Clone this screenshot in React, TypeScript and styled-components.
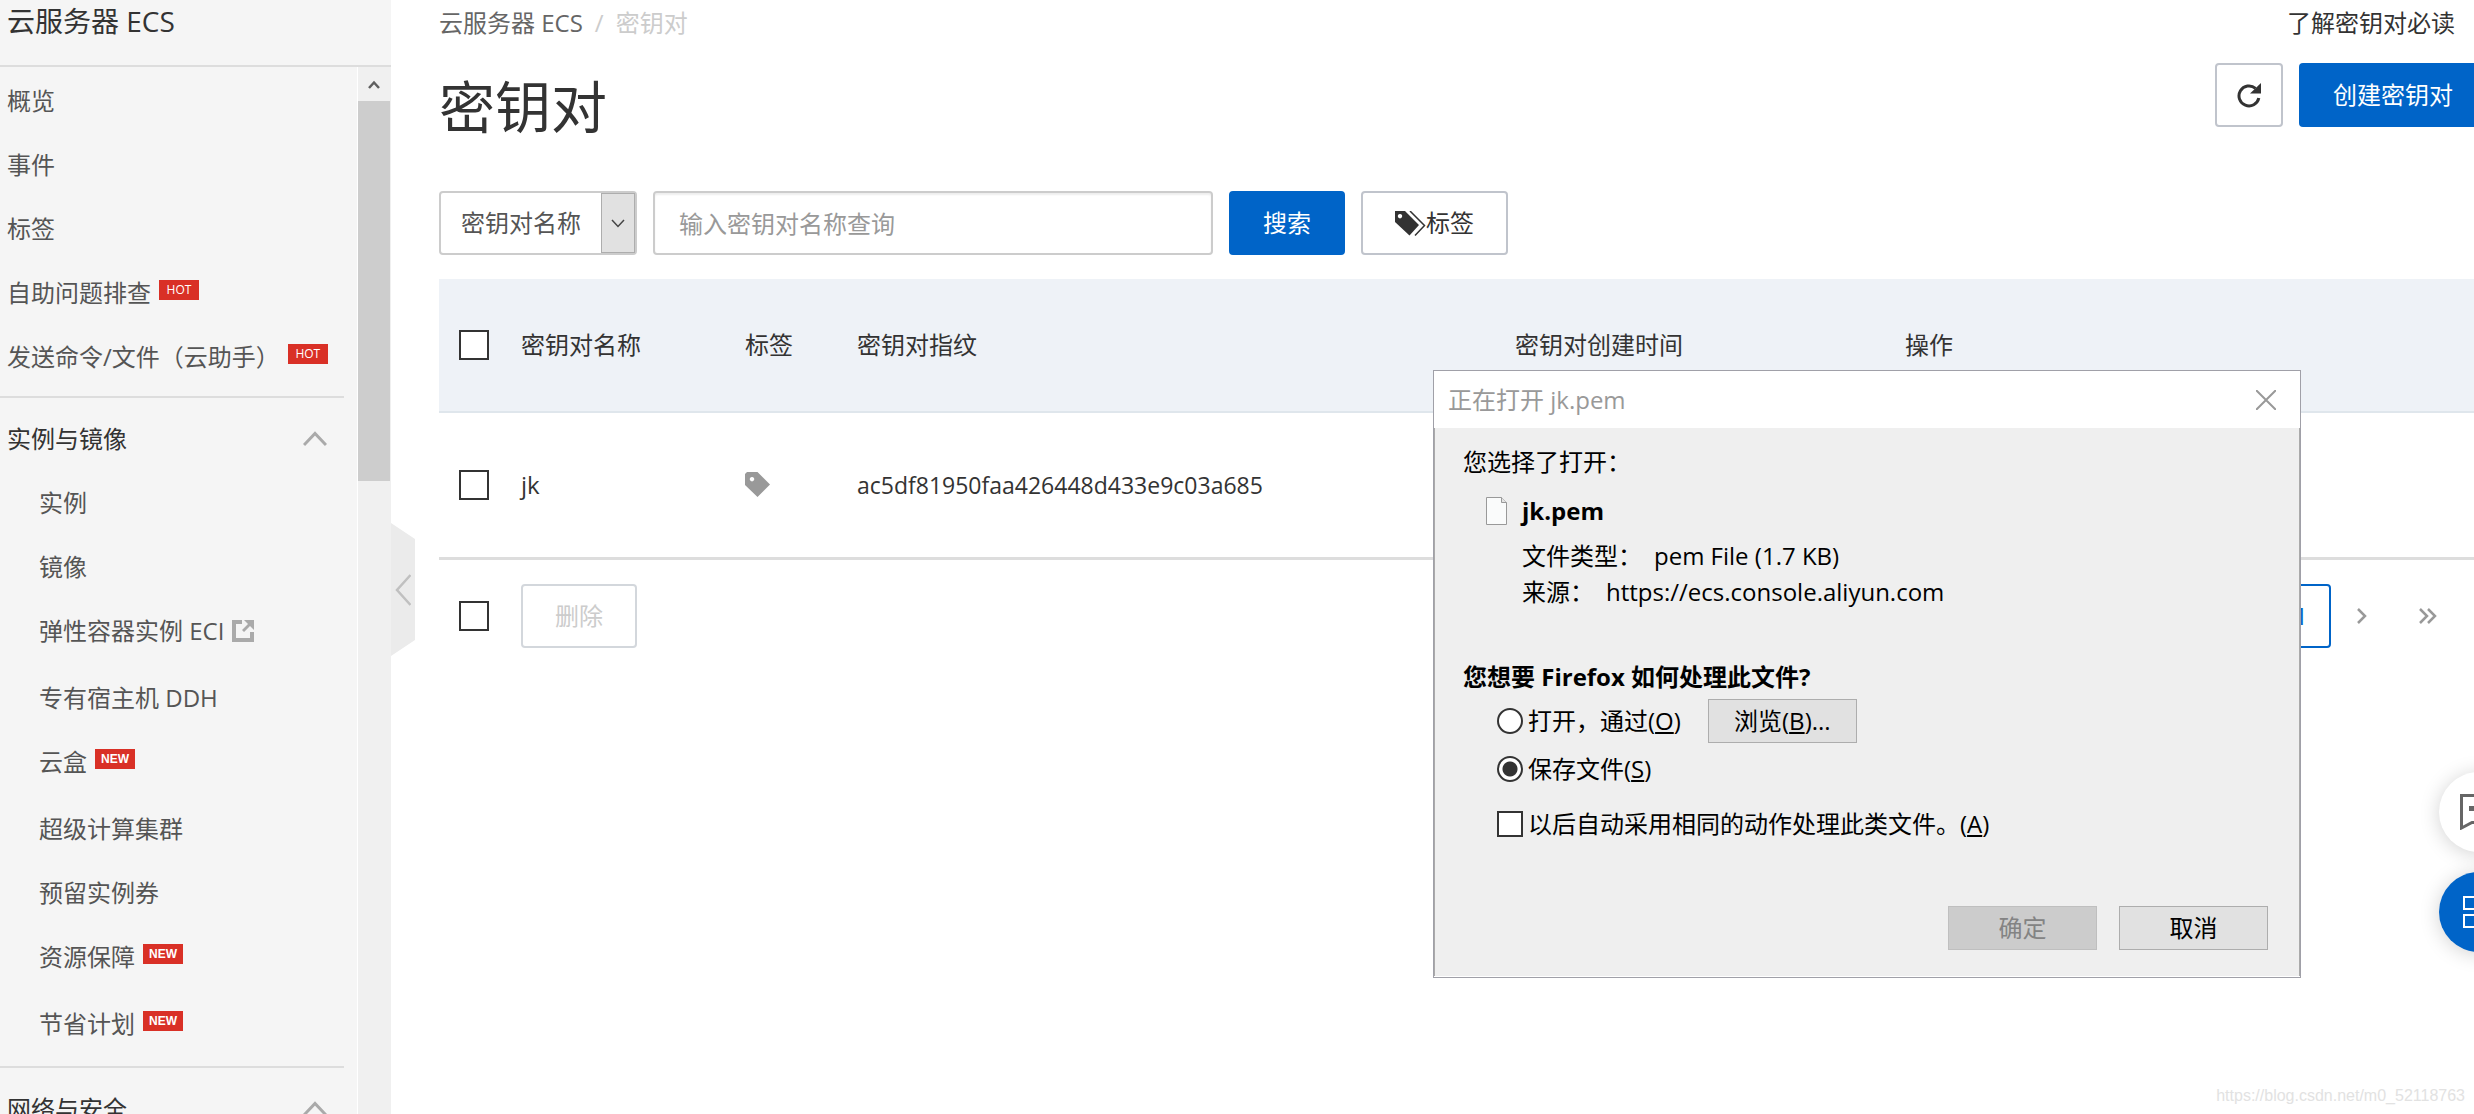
import React from "react";
import styled, { createGlobalStyle, css } from "styled-components";

const GlobalStyle = createGlobalStyle`
  * { box-sizing: border-box; }
  html, body { margin: 0; padding: 0; }
  body {
    background: #fff;
    color: #333;
    font-family: "Open Sans", "Noto Sans CJK SC", sans-serif;
    font-size: 24px;
    line-height: 32px;
  }
  button, input, select { font: inherit; color: inherit; margin: 0; }
  a { color: inherit; text-decoration: none; }
  h1, h2, h3, p, ul { margin: 0; padding: 0; font-weight: 400; }
  ul { list-style: none; }
`;

const Page = styled.div`
  display: flex;
  height: 100vh;
  overflow: hidden;
  position: relative;
`;

/* Sidebar */
const Sidebar = styled.aside`
  position: relative;
  flex: none;
  width: 391px;
  display: flex;
  flex-direction: column;
  background: #f5f5f5;
`;
const SidebarTitle = styled.h2`
  flex: none;
  height: 67px;
  padding: 3px 7px 0;
  border-bottom: 2px solid #ddd;
  font-size: 28px;
  line-height: 36px;
`;
const SidebarBody = styled.div`
  flex: 1;
  min-height: 0;
  display: flex;
`;
const Nav = styled.nav`
  flex: 1;
  min-width: 0;
  overflow: hidden;
  padding: 2px 13px 0 0;
`;
const NavList = styled.ul`
  color: #555;
`;
const NavItem = styled.li<{ $sub?: boolean; $tall?: boolean }>`
  padding-left: ${(p) => (p.$sub ? 39 : 7)}px;
  padding-bottom: ${(p) => (p.$tall ? 3 : 0)}px;
`;
const NavLink = styled.a`
  display: flex;
  align-items: center;
  gap: 8px;
  height: 64px;
  white-space: nowrap;
`;
const GroupButton = styled.button`
  display: flex;
  align-items: center;
  justify-content: space-between;
  width: 100%;
  height: 64px;
  padding: 0 17px 0 7px;
  border: 0;
  background: none;
  text-align: left;
`;
const Divider = styled.hr`
  margin: 7px 0 9px;
  border: 0;
  height: 2px;
  background: #ddd;
`;
const Badge = styled.span<{ $bold?: boolean }>`
  width: 40px;
  height: 20px;
  margin-bottom: 6px;
  background: #d93026;
  color: #fff;
  font-family: ${(p) => (p.$bold ? '"Liberation Sans"' : '"Open Sans"')}, sans-serif;
  font-weight: ${(p) => (p.$bold ? 700 : 400)};
  font-size: 12px;
  line-height: 20px;
  text-align: center;
`;
const ScrollTrack = styled.div`
  flex: none;
  width: 34px;
  padding-right: 1px;
  border-left: 1px solid #fff;
  background: #f0f0f0;
`;
const ScrollUp = styled.div`
  height: 34px;
  display: flex;
  align-items: center;
  justify-content: center;
`;
const ScrollThumb = styled.div`
  height: 380px;
  background: #cdcdcd;
`;
const CollapseHandle = styled.button`
  position: absolute;
  top: 523px;
  left: 100%;
  width: 24px;
  height: 133px;
  padding: 0;
  border: 0;
  background: #ebebeb;
  clip-path: polygon(0 0, 100% 16px, 100% 117px, 0 100%);
  display: flex;
  align-items: center;
  justify-content: center;
`;

/* Main area */
const Main = styled.main`
  flex: 1;
  min-width: 0;
  padding-left: 48px;
`;
const TopBar = styled.div`
  display: flex;
  justify-content: space-between;
  height: 63px;
  padding-right: 19px;
  line-height: 46px;
`;
const Crumbs = styled.nav`
  display: flex;
  gap: 12px;
  color: #ccc;
  a { color: #666; }
`;
const TitleRow = styled.div`
  display: flex;
  align-items: flex-start;
  justify-content: space-between;
  margin-bottom: 42px;
`;
const Title = styled.h1`
  font-size: 56px;
  line-height: 86px;
`;
const Actions = styled.div`
  display: flex;
  gap: 16px;
`;
const Button = styled.button<{ $kind?: "primary" | "edge" }>`
  display: inline-flex;
  align-items: center;
  justify-content: center;
  height: 64px;
  padding: 0 32px;
  border: 2px solid #c0c4cc;
  border-radius: 4px;
  background: #fff;
  white-space: nowrap;
  ${(p) =>
    p.$kind &&
    css`
      border-color: #0064c8;
      background: #0064c8;
      color: #fff;
    `}
  ${(p) =>
    p.$kind === "edge" &&
    css`
      padding-right: 21px;
      border-right: 0;
      border-radius: 4px 0 0 4px;
    `}
  &:disabled {
    border-color: #d3d7dc;
    color: #ccc;
  }
`;
const IconButton = styled(Button)`
  width: 68px;
  padding: 0;
`;
const Filters = styled.form`
  display: flex;
  gap: 16px;
  margin-bottom: 24px;
`;
const SelectBox = styled.div`
  display: flex;
  width: 198px;
  height: 64px;
  border: 2px solid #ccc;
  border-radius: 4px;
`;
const Select = styled.select`
  flex: 1;
  min-width: 0;
  padding: 0 0 0 20px;
  border: 0;
  appearance: none;
  background: transparent;
  color: #555;
  outline: 0;
`;
const SelectArrow = styled.span`
  display: flex;
  align-items: center;
  justify-content: center;
  width: 34px;
  border: 1px solid #adadad;
  background: #e1e1e1;
`;
const SearchInput = styled.input`
  width: 560px;
  height: 64px;
  padding: 0 24px;
  border: 2px solid #ccc;
  border-radius: 4px;
  box-shadow: inset 0 2px 2px #eee;
  outline: 0;
  &::placeholder { color: #999; opacity: 1; }
`;
const Check = styled.input`
  appearance: none;
  display: block;
  flex: none;
  width: 30px;
  height: 30px;
  border: 2px solid #333;
  background: #fff;
`;
const Table = styled.table`
  width: 100%;
  border-collapse: collapse;
  table-layout: fixed;
  th, td {
    padding: 0 16px;
    text-align: left;
    font-weight: 400;
    white-space: nowrap;
  }
  th { height: 133px; }
  td { height: 146px; }
  th:first-child, td:first-child { padding: 0 0 0 20px; }
  thead tr { background: #eef2f7; border-bottom: 2px solid #dfe6ec; }
  tbody tr { border-bottom: 3px solid #ddd; }
`;
const Fingerprint = styled.span`
  font-size: 23px;
`;
const TableFoot = styled.div`
  display: flex;
  align-items: center;
  gap: 32px;
  padding: 24px 19px 0 20px;
`;
const Pager = styled.nav`
  display: flex;
  margin-left: auto;
`;
const PageButton = styled.button<{ $active?: boolean }>`
  display: flex;
  align-items: center;
  width: 62px;
  height: 64px;
  padding: 0 0 0 26px;
  border: 0;
  background: none;
  color: #999;
  ${(p) =>
    p.$active &&
    css`
      width: 64px;
      padding: 0 0 0 4px;
      justify-content: center;
      border: 2px solid #0064c8;
      border-radius: 4px;
      color: #0064c8;
    `}
`;

/* Download dialog */
const Dialog = styled.section`
  position: absolute;
  top: 370px;
  right: 173px;
  width: 868px;
  border: 1px solid #a0a0a8;
  background: #fff;
  color: #000;
`;
const DialogHead = styled.header`
  display: flex;
  align-items: center;
  justify-content: space-between;
  height: 57px;
  padding: 0 24px 0 14px;
  color: #999;
`;
const CloseButton = styled.button`
  display: flex;
  padding: 0;
  border: 0;
  background: none;
`;
const DialogBody = styled.div`
  padding: 18px 31px 26px 28px;
  margin-bottom: 1px;
  border: solid #aaa;
  border-width: 0 1px;
  background: #efefef;
`;
const FileRow = styled.div`
  display: flex;
  align-items: center;
  gap: 15px;
  padding: 17px 0 11px 23px;
  line-height: 32px;
  strong { font-weight: 700; }
`;
const FileFacts = styled.dl`
  margin: 0 0 51px 59px;
  line-height: 36px;
  div { display: flex; gap: 12px; }
  dt, dd { margin: 0; }
`;
const Question = styled.h3`
  font-size: 24px;
  font-weight: 700;
  line-height: 32px;
`;
const OptionRow = styled.div<{ $height: number }>`
  display: flex;
  align-items: center;
  gap: 27px;
  height: ${(p) => p.$height}px;
  padding-left: 34px;
`;
const Option = styled.label`
  display: flex;
  align-items: center;
  gap: 5px;
`;
const Radio = styled.input`
  appearance: none;
  flex: none;
  width: 26px;
  height: 26px;
  border: 2px solid #333;
  border-radius: 50%;
  background: #fff;
  &:checked { background: radial-gradient(circle, #333 7px, #fff 8px); }
`;
const DialogCheck = styled(Check)`
  width: 26px;
  height: 26px;
`;
const DialogButton = styled.button`
  width: 149px;
  height: 44px;
  padding: 0;
  border: 1px solid #adadad;
  background: #e1e1e1;
  &:disabled {
    border-color: #bfbfbf;
    background: #ccc;
    color: #838383;
  }
`;
const DialogActions = styled.div`
  display: flex;
  justify-content: flex-end;
  gap: 22px;
  margin-top: 47px;
`;

/* Overlays on the page edge */
const FloatStack = styled.div`
  position: absolute;
  top: 772px;
  right: -45px;
  display: grid;
  gap: 20px;
`;
const FloatButton = styled.button<{ $blue?: boolean }>`
  display: flex;
  align-items: center;
  width: 80px;
  height: 80px;
  padding: 0 0 0 ${(p) => (p.$blue ? 24 : 21)}px;
  border: 0;
  border-radius: 50%;
  background: ${(p) => (p.$blue ? "#0064c8" : "#fff")};
  box-shadow: 0 2px 20px rgba(0, 0, 0, 0.18);
`;
const Watermark = styled.span`
  position: absolute;
  right: 9px;
  bottom: 8px;
  color: #e2e2e2;
  font-family: "Liberation Sans", sans-serif;
  font-size: 16px;
  line-height: 20px;
`;

type Item = { text: string; badge?: "HOT" | "NEW"; external?: boolean; tall?: boolean };

const topItems: Item[] = [
  { text: "概览" },
  { text: "事件" },
  { text: "标签" },
  { text: "自助问题排查", badge: "HOT" },
  { text: "发送命令/文件（云助手）", badge: "HOT" },
];
const instanceItems: Item[] = [
  { text: "实例" },
  { text: "镜像" },
  { text: "弹性容器实例 ECI", external: true, tall: true },
  { text: "专有宿主机 DDH" },
  { text: "云盒", badge: "NEW", tall: true },
  { text: "超级计算集群" },
  { text: "预留实例券" },
  { text: "资源保障", badge: "NEW", tall: true },
  { text: "节省计划", badge: "NEW", tall: true },
];

const ExternalIcon = () => (
  <svg width="22" height="22" viewBox="0 0 22 22" aria-hidden="true">
    <path d="M10 2H2v18h18v-8" fill="none" stroke="#aaa" strokeWidth="4" />
    <path d="M12 0h10v10l-4-4-6 6-2-2 6-6z" fill="#aaa" />
  </svg>
);
const ChevronUp = () => (
  <svg width="24" height="16" viewBox="0 0 24 16" aria-hidden="true">
    <path d="M1 14 12 2.500 23 14" fill="none" stroke="#aaa" strokeWidth="3" />
  </svg>
);
const TagsIcon = () => (
  <svg width="31" height="25" viewBox="0 0 31 25" aria-hidden="true">
    <path fillRule="evenodd" d="M0 0h10l14 14-9.500 10.500L0 11zM5 3a2.200 2.200 0 1 0 .01 0z" fill="#333" />
    <path d="M15 0 29.500 14.500 20 24.500" fill="none" stroke="#333" strokeWidth="1.500" />
  </svg>
);
const TagIcon = () => (
  <svg width="25" height="25" viewBox="0 0 25 25" aria-hidden="true">
    <path fillRule="evenodd" d="M2 0h10.500L25 12.500 12.500 25 0 13V2zM7 5a2.200 2.200 0 1 0 .01 0z" fill="#999" />
  </svg>
);
const TagLink = styled.a`
  display: flex;
`;
const RefreshIcon = () => (
  <svg width="26" height="26" viewBox="0 0 26 26" aria-hidden="true">
    <path d="M19.500 6.300A10 10 0 1 0 22.800 16" fill="none" stroke="#333" strokeWidth="3" />
    <path d="M25 1v10.500H14z" fill="#333" />
  </svg>
);
const FileIcon = () => (
  <svg width="21" height="28" viewBox="0 0 21 28" aria-hidden="true">
    <path d="M.5.500h15l5 5v22H.5z" fill="#fafbfb" stroke="#999" />
    <path d="M15.500.500v5h5" fill="#e4e4e4" stroke="#999" />
  </svg>
);

const renderItems = (items: Item[], sub: boolean) => (
  <NavList>
    {items.map((item) => (
      <NavItem key={item.text} $sub={sub} $tall={item.tall}>
        <NavLink href="#">
          <span>{item.text}</span>
          {item.badge && <Badge $bold={item.badge === "NEW"}>{item.badge}</Badge>}
          {item.external && <ExternalIcon />}
        </NavLink>
      </NavItem>
    ))}
  </NavList>
);

export default function App() {
  return (
    <Page>
      <GlobalStyle />
      <Sidebar>
        <SidebarTitle>云服务器 ECS</SidebarTitle>
        <SidebarBody>
          <Nav aria-label="云服务器 ECS">
            {renderItems(topItems, false)}
            <Divider />
            <GroupButton type="button">
              实例与镜像
              <ChevronUp />
            </GroupButton>
            {renderItems(instanceItems, true)}
            <Divider />
            <GroupButton type="button">
              网络与安全
              <ChevronUp />
            </GroupButton>
          </Nav>
          <ScrollTrack>
            <ScrollUp>
              <svg width="12" height="9" viewBox="0 0 12 9" aria-hidden="true">
                <path d="M1 8 6 2.500 11 8" fill="none" stroke="#606060" strokeWidth="2.500" />
              </svg>
            </ScrollUp>
            <ScrollThumb />
          </ScrollTrack>
        </SidebarBody>
        <CollapseHandle type="button" aria-label="收起">
          <svg width="16" height="32" viewBox="0 0 16 32" aria-hidden="true">
            <path d="M15.500 1 2 16l13.500 15" fill="none" stroke="#c0c0c0" strokeWidth="2.500" />
          </svg>
        </CollapseHandle>
      </Sidebar>

      <Main>
        <TopBar>
          <Crumbs aria-label="位置">
            <a href="#">云服务器 ECS</a>
            <span>/</span>
            <span>密钥对</span>
          </Crumbs>
          <a href="#">了解密钥对必读</a>
        </TopBar>
        <TitleRow>
          <Title>密钥对</Title>
          <Actions>
            <IconButton type="button" aria-label="刷新">
              <RefreshIcon />
            </IconButton>
            <Button type="button" $kind="edge">创建密钥对</Button>
          </Actions>
        </TitleRow>
        <Filters onSubmit={(e) => e.preventDefault()}>
          <SelectBox>
            <Select aria-label="查询字段">
              <option>密钥对名称</option>
            </Select>
            <SelectArrow aria-hidden="true">
              <svg width="14" height="9" viewBox="0 0 14 9">
                <path d="M1 1 7 7.500 13 1" fill="none" stroke="#444" strokeWidth="1.500" />
              </svg>
            </SelectArrow>
          </SelectBox>
          <SearchInput type="text" aria-label="密钥对名称" placeholder="输入密钥对名称查询" />
          <Button type="submit" $kind="primary">搜索</Button>
          <Button type="button">
            <TagsIcon />
            标签
          </Button>
        </Filters>
        <Table>
          <colgroup>
            <col width="66" />
            <col width="224" />
            <col width="112" />
            <col width="658" />
            <col width="390" />
            <col />
          </colgroup>
          <thead>
            <tr>
              <th><Check type="checkbox" aria-label="全选" /></th>
              <th>密钥对名称</th>
              <th>标签</th>
              <th>密钥对指纹</th>
              <th>密钥对创建时间</th>
              <th>操作</th>
            </tr>
          </thead>
          <tbody>
            <tr>
              <td><Check type="checkbox" aria-label="jk" /></td>
              <td>jk</td>
              <td>
                <TagLink href="#" aria-label="编辑标签">
                  <TagIcon />
                </TagLink>
              </td>
              <td><Fingerprint>ac5df81950faa426448d433e9c03a685</Fingerprint></td>
              <td />
              <td />
            </tr>
          </tbody>
        </Table>
        <TableFoot>
          <Check type="checkbox" aria-label="选择全部" />
          <Button type="button" disabled>删除</Button>
          <Pager aria-label="分页">
            <PageButton type="button" $active>1</PageButton>
            <PageButton type="button" aria-label="下一页">
              <svg width="10" height="16" viewBox="0 0 10 16" aria-hidden="true">
                <path d="M1 1l7 7-7 7" fill="none" stroke="#999" strokeWidth="2.500" />
              </svg>
            </PageButton>
            <PageButton type="button" aria-label="末页">
              <svg width="18" height="16" viewBox="0 0 18 16" aria-hidden="true">
                <path d="M1 1l7 7-7 7M9 1l7 7-7 7" fill="none" stroke="#999" strokeWidth="2.500" />
              </svg>
            </PageButton>
          </Pager>
        </TableFoot>
      </Main>

      <Dialog role="dialog" aria-label="正在打开 jk.pem">
        <DialogHead>
          <span>正在打开 jk.pem</span>
          <CloseButton type="button" aria-label="关闭">
            <svg width="20" height="20" viewBox="0 0 20 20" aria-hidden="true">
              <path d="M0 0 20 20M20 0 0 20" stroke="#999" strokeWidth="2" />
            </svg>
          </CloseButton>
        </DialogHead>
        <DialogBody>
          <p>您选择了打开：</p>
          <FileRow>
            <FileIcon />
            <strong>jk.pem</strong>
          </FileRow>
          <FileFacts>
            <div>
              <dt>文件类型：</dt>
              <dd>pem File (1.7 KB)</dd>
            </div>
            <div>
              <dt>来源：</dt>
              <dd>https://ecs.console.aliyun.com</dd>
            </div>
          </FileFacts>
          <Question>您想要 Firefox 如何处理此文件?</Question>
          <OptionRow $height={56}>
            <Option>
              <Radio type="radio" name="action" />
              <span>打开，通过(<u>O</u>)</span>
            </Option>
            <DialogButton type="button">浏览(<u>B</u>)...</DialogButton>
          </OptionRow>
          <OptionRow $height={40}>
            <Option>
              <Radio type="radio" name="action" defaultChecked />
              <span>保存文件(<u>S</u>)</span>
            </Option>
          </OptionRow>
          <OptionRow $height={70}>
            <Option>
              <DialogCheck type="checkbox" />
              <span>以后自动采用相同的动作处理此类文件。(<u>A</u>)</span>
            </Option>
          </OptionRow>
          <DialogActions>
            <DialogButton type="button" disabled>确定</DialogButton>
            <DialogButton type="button">取消</DialogButton>
          </DialogActions>
        </DialogBody>
      </Dialog>

      <FloatStack>
        <FloatButton type="button" aria-label="反馈">
          <svg width="44" height="36" viewBox="0 0 44 36" aria-hidden="true">
            <path d="M1.500 1.500h41v27H12L1.500 34z" fill="none" stroke="#666" strokeWidth="3" />
            <path d="M9 12h5v5H9zM19 12h5v5h-5zM29 12h5v5h-5z" fill="#666" />
          </svg>
        </FloatButton>
        <FloatButton type="button" $blue aria-label="工具">
          <svg width="32" height="32" viewBox="0 0 32 32" aria-hidden="true">
            <path d="M1 1h14v12H1zM19 1h12v12H19zM1 19h14v12H1zM19 19h12v12H19z" fill="none" stroke="#fff" strokeWidth="2" />
          </svg>
        </FloatButton>
      </FloatStack>
      <Watermark>https://blog.csdn.net/m0_52118763</Watermark>
    </Page>
  );
}
